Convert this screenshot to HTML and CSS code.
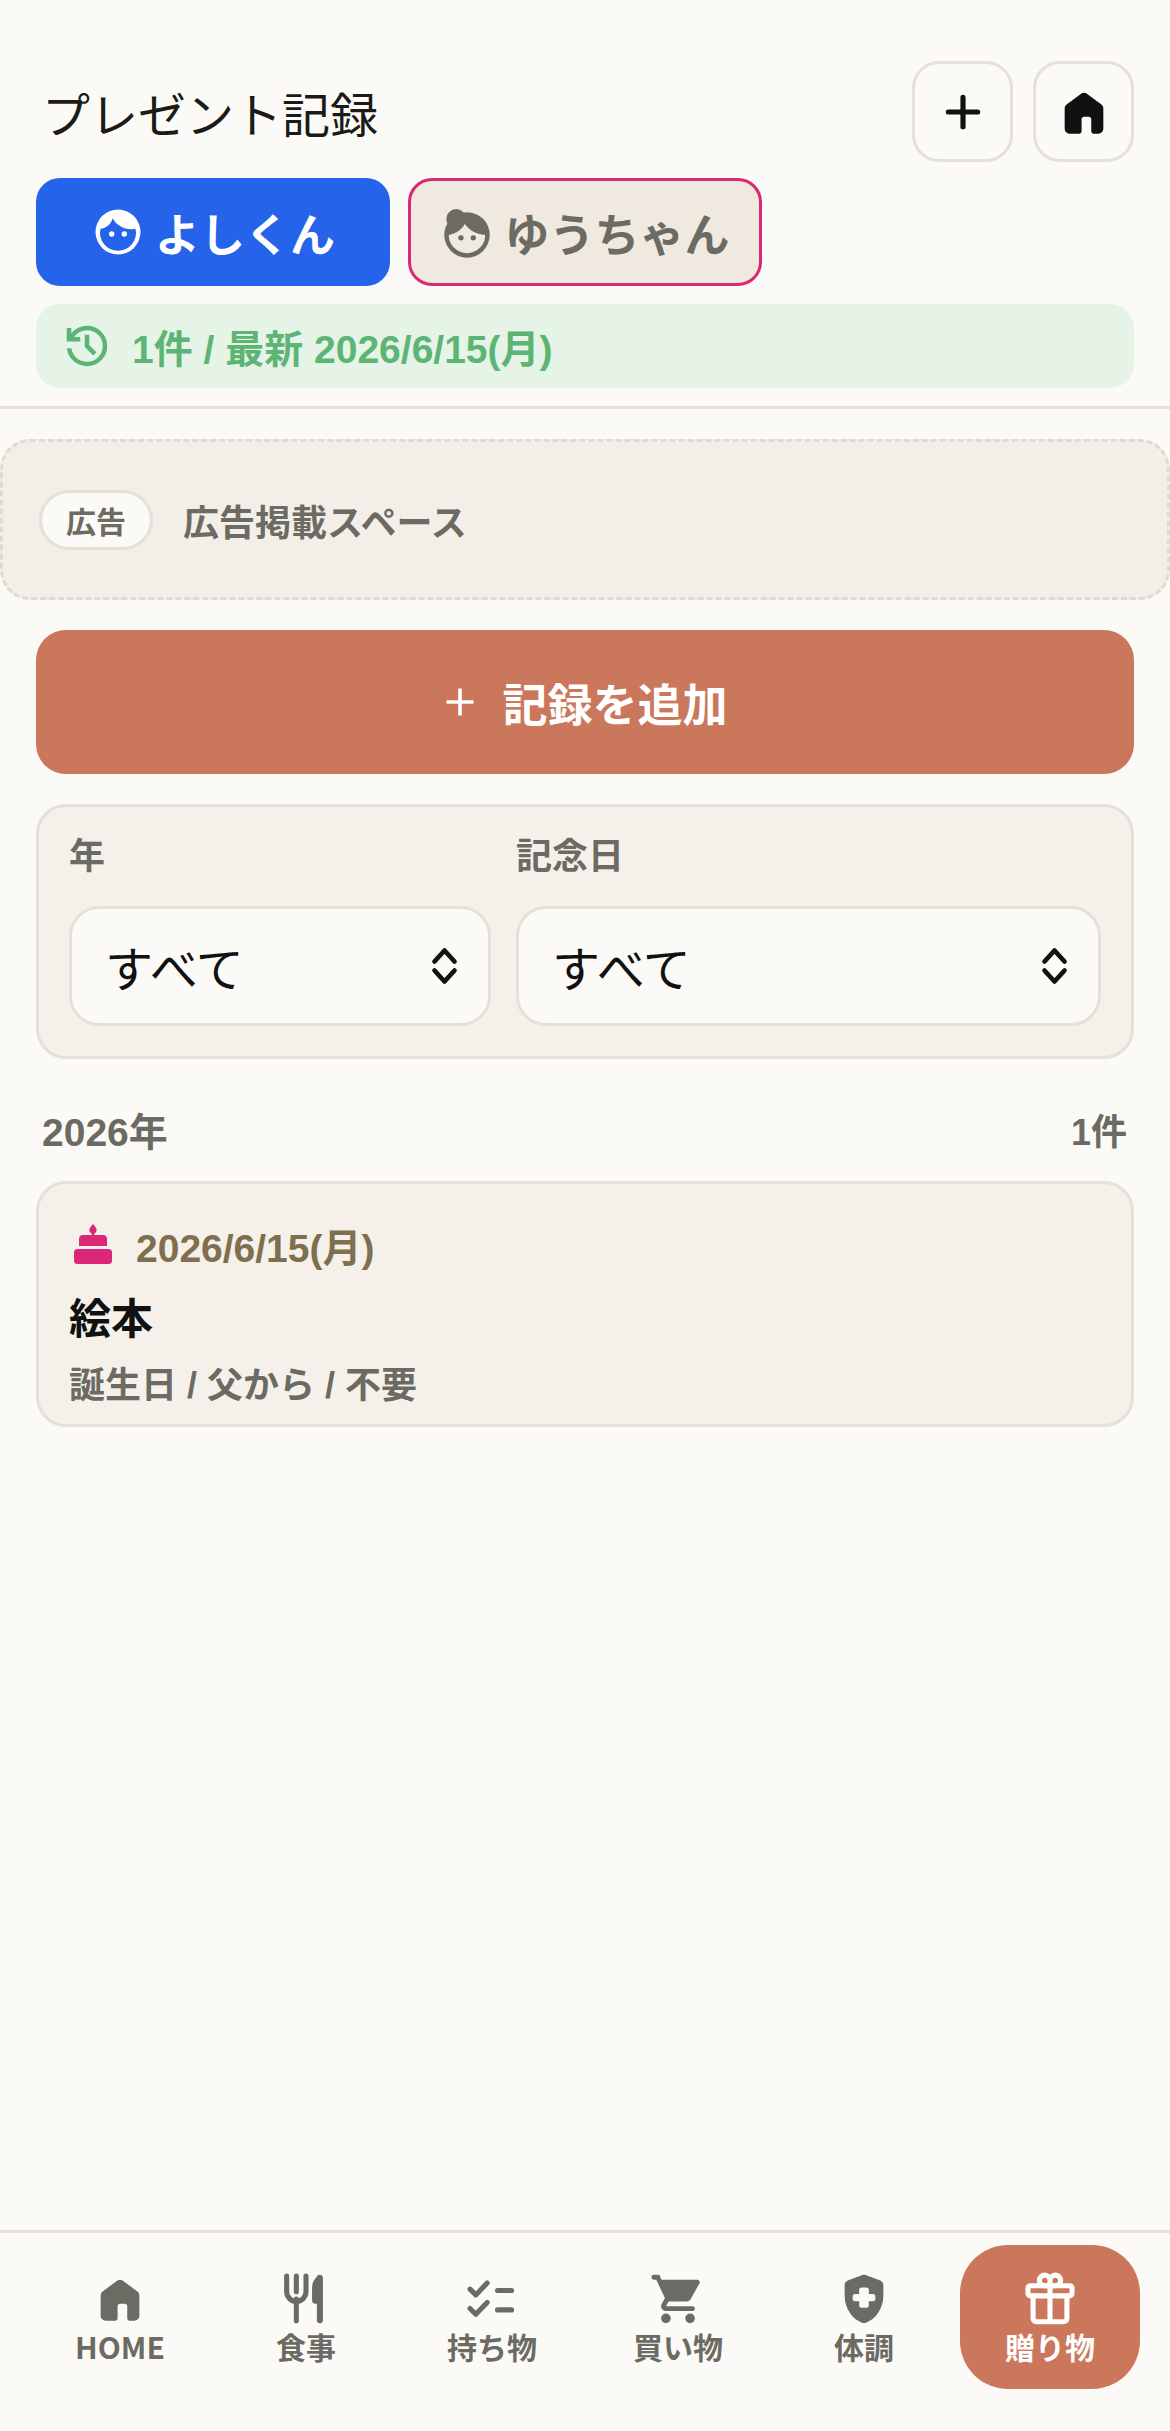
FILE: index.html
```html
<!DOCTYPE html>
<html lang="ja">
<head>
    <meta charset="UTF-8">
    <title>プレゼント記録</title>
    <link rel="stylesheet" href="styles.css">
</head>
<body>
<div class="page">
    <header class="top">
        <div class="title-row">
            <h1 class="title">プレゼント記録</h1>
            <div class="title-actions">
                <button class="square-btn">
                    <svg class="icon-plus" viewBox="0 0 24 24"><path d="M12 5.5v13M5.5 12h13"/></svg>
                </button>
                <button class="square-btn">
                    <svg class="icon" viewBox="0 0 24 24"><path d="M4 19v-8.5q0-.5.2-.9.2-.4.6-.7l6-4.5q.5-.4 1.2-.4t1.2.4l6 4.5q.4.3.6.7.2.4.2.9V19q0 .8-.6 1.4-.6.6-1.4.6h-2q-.4 0-.7-.3-.3-.3-.3-.7v-5q0-.4-.3-.7-.3-.3-.7-.3h-2q-.4 0-.7.3-.3.3-.3.7v5q0 .4-.3.7-.3.3-.7.3H6q-.8 0-1.4-.6Q4 19.8 4 19Z"/></svg>
                </button>
            </div>
        </div>
        <div class="tabs">
            <button class="tab tab-boy">
                <svg class="icon" viewBox="0 0 24 24">
                    <path fill-rule="evenodd" d="M12 2a10 10 0 1 0 0 20 10 10 0 0 0 0-20ZM4.2 10.6C6.8 10.300 8.900 8.500 9.700 5.900 11.200 9.200 15.400 11.400 19.800 10.600A8 8 0 1 1 4.200 10.600Z"/>
                    <circle cx="9.200" cy="12.900" r="1.200"/>
                    <circle cx="14.800" cy="12.900" r="1.200"/>
                </svg>
                よしくん
            </button>
            <button class="tab tab-girl">
                <svg class="icon" viewBox="0 0 24 24">
                    <circle cx="7.200" cy="6.200" r="4.400"/>
                    <path fill-rule="evenodd" d="M12 3.200a10.100 10.100 0 1 0 0 20.200 10.100 10.100 0 0 0 0-20.200ZM3.900 13.300C7.500 12.500 9.800 10.800 11 8.300 13 11.400 16.500 13 20.100 13.300A8.100 8.100 0 1 1 3.900 13.300Z"/>
                    <circle cx="9.300" cy="14.600" r="1.200"/>
                    <circle cx="14.800" cy="14.600" r="1.200"/>
                </svg>
                ゆうちゃん
            </button>
        </div>
        <div class="summary">
            <svg class="icon" viewBox="0 0 24 24"><path d="M12 21q-3.450 0-6.012-2.288T3.050 13H5.100q.35 2.600 2.313 4.300T12 19q2.925 0 4.963-2.037T19 12q0-2.925-2.037-4.962T12 5q-1.725 0-3.225.8T6.250 8H9v2H3V4h2v2.350q1.275-1.600 3.113-2.475T12 3q3.750 0 6.375 2.625T21 12q0 3.750-2.625 6.375T12 21Zm2.800-4.800L11 12.400V7h2v4.600l3.200 3.200-1.400 1.400Z"/></svg>
            <span>1件 / 最新 2026/6/15(月)</span>
        </div>
    </header>

    <main class="content">
        <div class="ad-space">
            <span class="ad-pill">広告</span>
            <span class="ad-text">広告掲載スペース</span>
        </div>

        <div class="inner">
            <button class="add-btn">
                <svg class="icon-add" viewBox="0 0 24 24"><path d="M12 3v18M3 12h18"/></svg>
                記録を追加
            </button>

            <section class="filters">
                <div class="filter filter-year">
                    <label class="filter-label">年</label>
                    <div class="select-box">
                        すべて
                        <svg class="icon-updown" viewBox="0 0 24 36"><path d="M3 14 12 4l9 10M3 22l9 10 9-10"/></svg>
                    </div>
                </div>
                <div class="filter filter-day">
                    <label class="filter-label">記念日</label>
                    <div class="select-box">
                        すべて
                        <svg class="icon-updown" viewBox="0 0 24 36"><path d="M3 14 12 4l9 10M3 22l9 10 9-10"/></svg>
                    </div>
                </div>
            </section>

            <div class="year-head">
                <span class="year-name">2026年</span>
                <span class="year-count">1件</span>
            </div>

            <article class="record">
                <div class="record-date">
                    <svg class="icon-cake" viewBox="0 0 38 42">
                        <path d="M19 0c2.200 2.400 3.600 4.200 3.600 6 0 1.700-1 3-2.300 3.400V11H29c2.500 0 4 1.600 4 4v7H5v-7c0-2.400 1.500-4 4-4h8.700V9.400C16.400 9 15.400 7.700 15.400 6c0-1.800 1.400-3.600 3.600-6Z"/>
                        <rect x="0" y="25" width="38" height="15" rx="3.500"/>
                    </svg>
                    <span>2026/6/15(月)</span>
                </div>
                <div class="record-name">絵本</div>
                <div class="record-meta">誕生日 / 父から / 不要</div>
            </article>
        </div>
    </main>

    <nav class="bottom-nav">
        <a class="nav-item">
            <svg class="icon" viewBox="0 0 24 24"><path d="M4 19v-8.500q0-.5.2-.9.2-.4.6-.7l6-4.500q.5-.4 1.200-.4t1.200.4l6 4.500q.4.3.6.7.2.4.2.9V19q0 .8-.6 1.400-.6.6-1.400.6h-2q-.4 0-.7-.3-.3-.3-.3-.7v-5q0-.4-.3-.7-.3-.3-.7-.3h-2q-.4 0-.7.3-.3.3-.3.7v5q0 .4-.3.7-.3.3-.7.3H6q-.8 0-1.400-.6Q4 19.800 4 19Z"/></svg>
            <span>HOME</span>
        </a>
        <a class="nav-item">
            <svg class="icon" viewBox="0 0 24 24"><path d="M4 2.500v6.500M8 2.500v6.500M12 2.500v6.500a4 4 0 0 1-8 0M8 12v9" class="fork"/><path d="M16.500 2.800c0-.6.8-.9 1.300-.8.700.1 1.200.6 1.200 1.300V20.800a1.200 1.200 0 0 1-2.500 0V14h-.5c-.9 0-1.500-.6-1.500-1.500V7.500c0-2 .8-3.600 2-4.700Z"/></svg>
            <span>食事</span>
        </a>
        <a class="nav-item">
            <svg class="icon icon-line" viewBox="0 0 24 24"><path d="M2.900 7.900 5.300 10.300 10 5.400M2.900 15.900 5.300 18.300 10 13.400M14.300 8.500h5.800M14.300 16.500h5.800"/></svg>
            <span>持ち物</span>
        </a>
        <a class="nav-item">
            <svg class="icon" viewBox="0 0 24 24"><path d="M7 22q-.825 0-1.412-.587Q5 20.825 5 20t.588-1.413Q6.175 18 7 18t1.412.587Q9 19.175 9 20t-.588 1.413Q7.825 22 7 22Zm10 0q-.825 0-1.412-.587Q15 20.825 15 20t.588-1.413Q16.175 18 17 18t1.413.587Q19 19.175 19 20t-.587 1.413Q17.825 22 17 22ZM5.200 4h14.750q.575 0 .875.512.3.513.025 1.038l-3.550 6.400q-.275.5-.738.775Q16.100 13 15.550 13H8.100L7 15h11a1 1 0 0 1 0 2H7q-1.125 0-1.700-.987-.575-.988-.05-1.963L6.600 11.600 3 4H2a1 1 0 0 1 0-2h2.250Z"/></svg>
            <span>買い物</span>
        </a>
        <a class="nav-item">
            <svg class="icon" viewBox="0 0 24 24"><path fill-rule="evenodd" d="M11.300 2.100c.5-.15.9-.15 1.400 0l6 2.200c.8.3 1.300 1 1.300 1.900v4.600c0 5.200-3.400 9.900-7.400 11.100-.4.100-.8.100-1.200 0C7.400 20.700 4 16 4 10.800V6.200c0-.9.5-1.600 1.300-1.900ZM10.900 7.200c-.5 0-.9.4-.9.9V9.900H8.200c-.5 0-.9.4-.9.9v1.200c0 .5.4.9.9.9H10v1.800c0 .5.4.9.9.9h2.200c.5 0 .9-.4.9-.9V12.900h1.800c.5 0 .9-.4.9-.9v-1.200c0-.5-.4-.9-.9-.9H14V8.100c0-.5-.4-.9-.9-.9Z"/></svg>
            <span>体調</span>
        </a>
        <a class="nav-item nav-item-active">
            <svg class="icon icon-line" viewBox="0 0 24 24">
                <rect x="2.900" y="6.500" width="18.200" height="4.200" rx="1"/>
                <path d="M5 10.700V20c0 .8.600 1.400 1.400 1.400h11.200c.8 0 1.400-.6 1.400-1.400v-9.300M12 6.500v14.900M12 6.500H9.500a2.200 2.200 0 1 1 2.500-2.200M12 6.500h2.500A2.200 2.200 0 1 0 12 4.300V6.500"/>
            </svg>
            <span>贈り物</span>
        </a>
    </nav>
</div>
</body>
</html>
```

FILE: styles.css
```css
* {
    box-sizing: border-box;
}
body {
    margin: 0;
    background-color: #fbfaf6;
    color: #6b6a63;
    font-family: "Liberation Sans", "Noto Sans CJK JP", sans-serif;
}
button {
    font-family: inherit;
    cursor: pointer;
}
.page {
    display: flex;
    flex-direction: column;
    min-height: 100vh;
}
.icon {
    width: 58px;
    height: 58px;
    flex: none;
    fill: currentColor;
}
.icon-line {
    fill: none;
    stroke: currentColor;
    stroke-width: 2.1;
    stroke-linecap: round;
    stroke-linejoin: round;
}

/* header */
.top {
    padding: 61px 36px 18px;
    border-bottom: 3px solid #e5e0d8;
}
.title-row {
    display: flex;
    justify-content: space-between;
    align-items: center;
}
.title {
    margin: 0 0 0 6px;
    font-family: "Liberation Serif", "Noto Sans CJK JP", serif;
    font-size: 48px;
    font-weight: 400;
    color: #1a1a17;
}
.title-actions {
    display: flex;
    gap: 20px;
}
.square-btn {
    display: flex;
    align-items: center;
    justify-content: center;
    width: 101px;
    height: 101px;
    padding: 0;
    background: none;
    border: 3px solid #e5e0d8;
    border-radius: 27px;
    color: #111;
}
.icon-plus {
    width: 54px;
    height: 54px;
    fill: none;
    stroke: currentColor;
    stroke-width: 2.3;
    stroke-linecap: round;
}
.tabs {
    display: flex;
    gap: 18px;
    margin-top: 16px;
}
.tab {
    display: flex;
    align-items: center;
    justify-content: center;
    gap: 10px;
    width: 354px;
    height: 108px;
    padding: 0;
    border-radius: 24px;
    font-size: 45px;
    font-weight: 700;
}
.tab .icon {
    width: 54px;
    height: 54px;
}
.tab-boy {
    background-color: #2563eb;
    border: 0;
    color: #fff;
}
.tab-girl {
    background-color: #f0e9df;
    border: 3px solid #db2777;
    color: #6b6a63;
}
.summary {
    display: flex;
    align-items: center;
    gap: 18px;
    height: 84px;
    margin-top: 18px;
    padding: 0 24px;
    background-color: #e6f3e7;
    border-radius: 24px;
    color: #5cb574;
    font-size: 39px;
    font-weight: 700;
}
.summary .icon {
    width: 54px;
    height: 54px;
}

/* main */
.content {
    flex: 1;
    padding-top: 30px;
}
.ad-space {
    display: flex;
    align-items: center;
    gap: 30px;
    height: 161px;
    padding: 0 36px;
    background-color: #f3efe8;
    border: 3px dashed #e5d9ce;
    border-radius: 30px;
    font-weight: 700;
}
.ad-pill {
    display: flex;
    align-items: center;
    justify-content: center;
    width: 114px;
    height: 60px;
    background-color: #fbfaf6;
    border: 3px solid #e5e0d8;
    border-radius: 30px;
    font-size: 30px;
}
.ad-text {
    font-size: 36px;
}
.inner {
    padding: 30px 36px 0;
}
.add-btn {
    display: flex;
    align-items: center;
    justify-content: center;
    gap: 24px;
    width: 100%;
    height: 144px;
    background-color: #cb775b;
    border: 0;
    border-radius: 30px;
    color: #fff;
    font-size: 45px;
    font-weight: 700;
}
.icon-add {
    width: 36px;
    height: 36px;
    fill: none;
    stroke: currentColor;
    stroke-width: 2.4;
}
.filters {
    display: grid;
    grid-template-columns: 422px 585px;
    gap: 25px;
    height: 255px;
    margin-top: 30px;
    padding: 30px;
    background-color: #f5f1ea;
    border: 3px solid #e5e0d8;
    border-radius: 30px;
}
.filter-label {
    display: block;
    height: 39px;
    font-size: 36px;
    line-height: 39px;
    font-weight: 700;
}
.select-box {
    display: flex;
    align-items: center;
    justify-content: space-between;
    height: 120px;
    margin-top: 30px;
    padding: 0 30px 0 33px;
    background-color: #fbfaf6;
    border: 3px solid #e5e0d8;
    border-radius: 30px;
    color: #111;
    font-size: 48px;
}
.icon-updown {
    width: 27px;
    height: 40px;
    fill: none;
    stroke: currentColor;
    stroke-width: 4.2;
    stroke-linecap: round;
    stroke-linejoin: round;
}
.year-head {
    display: flex;
    justify-content: space-between;
    align-items: center;
    margin-top: 42px;
    padding: 0 7px 0 6px;
    font-weight: 700;
}
.year-name {
    font-size: 39px;
}
.year-count {
    font-size: 36px;
}
.record {
    height: 246px;
    margin-top: 24px;
    padding: 33px 30px 0;
    background-color: #f5f1ea;
    border: 3px solid #e5e0d8;
    border-radius: 30px;
}
.record-date {
    display: flex;
    align-items: center;
    gap: 24px;
    color: #7f6f4f;
    font-size: 39px;
    font-weight: 700;
}
.icon-cake {
    width: 38px;
    height: 42px;
    margin-left: 5px;
    fill: #db2777;
}
.record-name {
    margin-top: 12px;
    color: #111;
    font-size: 42px;
    font-weight: 700;
}
.record-meta {
    margin-top: 10px;
    font-size: 36px;
    font-weight: 700;
}

/* bottom nav */
.bottom-nav {
    display: grid;
    grid-template-columns: repeat(6, 1fr);
    gap: 6px;
    height: 201px;
    padding: 12px 30px 42px;
    border-top: 3px solid #e5e0d8;
}
.nav-item {
    display: flex;
    flex-direction: column;
    align-items: center;
    justify-content: center;
    gap: 0;
    border-radius: 48px;
    font-family: "Noto Sans CJK JP", sans-serif;
    font-size: 30px;
    font-weight: 700;
    line-height: 36px;
    color: #6b6a63;
}
.nav-item-active {
    background-color: #cb775b;
    color: #fff;
}
.fork {
    fill: none;
    stroke: currentColor;
    stroke-width: 2.100;
    stroke-linecap: round;
}
```
